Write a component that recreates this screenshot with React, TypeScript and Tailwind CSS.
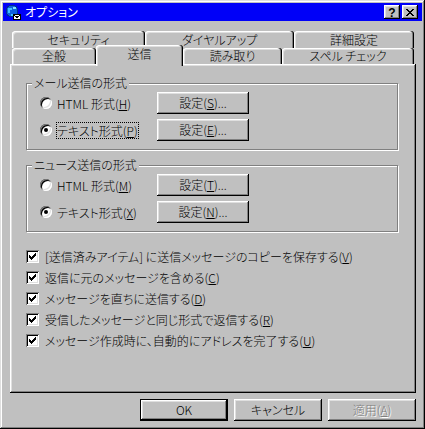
import React from "react";

const raised =
  "shadow-[inset_-1px_-1px_0_#000,inset_1px_1px_0_#fff,inset_-2px_-2px_0_#808080,inset_2px_2px_0_#dfdfdf]";
const tabShadow =
  "shadow-[inset_-1px_0_0_#000,inset_-2px_0_0_#808080,inset_1px_1px_0_#fff,inset_2px_2px_0_#dfdfdf]";
const sunken =
  "shadow-[inset_1px_1px_0_#808080,inset_-1px_-1px_0_#fff,inset_2px_2px_0_#000,inset_-2px_-2px_0_#dfdfdf]";

function Tab({
  label,
  w,
  selected,
}: {
  label: string;
  w: string;
  selected?: boolean;
}) {
  return (
    <div
      className={`${w} ${
        selected ? "relative z-10 -mt-[3px] h-[21px] pb-[3px]" : "h-full"
      } ${tabShadow} shrink-0 rounded-t-[3px] bg-[#c0c0c0] flex items-center justify-center whitespace-nowrap leading-none`}
    >
      {label}
    </div>
  );
}

function Btn({
  className,
  children,
}: {
  className: string;
  children: React.ReactNode;
}) {
  return (
    <div
      className={`${className} ${raised} bg-[#c0c0c0] flex items-center justify-center whitespace-nowrap leading-none`}
    >
      {children}
    </div>
  );
}

function Radio({ checked }: { checked?: boolean }) {
  return (
    <div
      className={`w-[12px] h-[12px] rounded-full bg-white ${sunken} flex items-center justify-center shrink-0`}
    >
      {checked && <div className="w-[4px] h-[4px] rounded-full bg-black" />}
    </div>
  );
}

function Check() {
  return (
    <div className={`w-[13px] h-[13px] bg-white ${sunken} shrink-0 relative`}>
      <svg
        width="13"
        height="13"
        viewBox="0 0 13 13"
        className="absolute left-0 top-0"
        shapeRendering="crispEdges"
      >
        <rect x="3" y="5" width="1" height="3" fill="#000" />
        <rect x="4" y="6" width="1" height="3" fill="#000" />
        <rect x="5" y="7" width="1" height="3" fill="#000" />
        <rect x="6" y="6" width="1" height="3" fill="#000" />
        <rect x="7" y="5" width="1" height="3" fill="#000" />
        <rect x="8" y="4" width="1" height="3" fill="#000" />
        <rect x="9" y="3" width="1" height="3" fill="#000" />
      </svg>
    </div>
  );
}

function RadioRow({
  checked,
  label,
  btn,
  focus,
}: {
  checked?: boolean;
  label: React.ReactNode;
  btn: React.ReactNode;
  focus?: boolean;
}) {
  return (
    <div className="flex items-center h-[22px]">
      <div className="w-[117px] flex items-center">
        <Radio checked={checked} />
        <span
          className={`ml-[4px] border ${
            focus ? "border-dotted border-black" : "border-transparent"
          } leading-[15px] whitespace-nowrap`}
        >
          {label}
        </span>
      </div>
      <Btn className="w-[92px] h-[22px]">{btn}</Btn>
    </div>
  );
}

function Group({
  title,
  children,
  className,
}: {
  title: string;
  children: React.ReactNode;
  className: string;
}) {
  return (
    <div
      className={`${className} relative w-[372px] border border-[#808080] shadow-[1px_1px_0_#fff,inset_1px_1px_0_#fff] pl-[13px] pt-[8px] pb-[8px] flex flex-col gap-[5px]`}
    >
      <span className="absolute left-[5px] -top-[8px] bg-[#c0c0c0] px-[2px] leading-[14px] whitespace-nowrap">
        {title}
      </span>
      {children}
    </div>
  );
}

function CheckRow({ children }: { children: React.ReactNode }) {
  return (
    <div className="flex items-center h-[21px]">
      <Check />
      <span className="ml-[6px] whitespace-nowrap leading-none">{children}</span>
    </div>
  );
}

function Icon() {
  return (
    <svg width="16" height="16" viewBox="0 0 16 16" shapeRendering="crispEdges">
      <circle cx="7" cy="7" r="6" fill="#1060e0" />
      <path d="M3 4h4v2h-2v3h-2z" fill="#40c0ff" />
      <path d="M8 3h3v2h-3z" fill="#80e0ff" />
      <path d="M6 10h3v2h-3z" fill="#40c0ff" />
      <circle cx="7" cy="7" r="6" fill="none" stroke="#003090" strokeWidth="1" />
      <rect x="8.5" y="10.5" width="7" height="5" fill="#fff" stroke="#000" />
      <path d="M9 11l3 2.5l3-2.5" fill="none" stroke="#000" />
    </svg>
  );
}

export default function App() {
  return (
    <div className="w-[425px] h-[429px] bg-[#c0c0c0] p-[3px] shadow-[inset_-1px_-1px_0_#000,inset_1px_1px_0_#dfdfdf,inset_-2px_-2px_0_#808080,inset_2px_2px_0_#fff] font-['Noto_Sans_CJK_JP','Noto_Sans',sans-serif] font-light [font-feature-settings:'palt'] text-[12px] text-black flex flex-col">
      {/* title bar */}
      <div className="h-[18px] bg-[#0000f8] flex items-center shrink-0">
        <div className="ml-[2px] w-[16px] h-[16px]">
          <Icon />
        </div>
        <span className="ml-[4px] text-white leading-none font-normal">オプション</span>
        <div className="flex-1" />
        <div
          className={`w-[16px] h-[14px] ${raised} bg-[#c0c0c0] flex items-center justify-center font-['Liberation_Sans',sans-serif] font-bold text-[12px] leading-none pt-[1px]`}
        >
          ?
        </div>
        <div
          className={`ml-[2px] mr-[4px] w-[16px] h-[14px] ${raised} bg-[#c0c0c0] flex items-center justify-center`}
        >
          <svg width="8" height="7" viewBox="0 0 8 7" shapeRendering="crispEdges">
            <path
              d="M0 0h2v1h-2zM6 0h2v1h-2zM1 1h2v1h-2zM5 1h2v1h-2zM2 2h4v1h-4zM3 3h2v1h-2zM2 4h4v1h-4zM1 5h2v1h-2zM5 5h2v1h-2zM0 6h2v1h-2zM6 6h2v1h-2z"
              fill="#000"
            />
          </svg>
        </div>
      </div>

      {/* tabs + panel */}
      <div className="ml-[7px] mt-[10px] w-[406px] flex flex-col">
        <div className="ml-[2px] h-[17px] flex">
          <Tab label="セキュリティ" w="w-[133px]" />
          <Tab label="ダイヤルアップ" w="w-[149px]" />
          <Tab label="詳細設定" w="w-[120px]" />
        </div>
        <div className="ml-[2px] h-[16px] flex items-start">
          <Tab label="全般" w="w-[84px]" />
          <Tab label="送信" w="w-[87px]" selected />
          <Tab label="読み取り" w="w-[99px]" />
          <Tab label="スペル チェック" w="w-[132px]" />
        </div>
        <div className="h-[329px] shadow-[inset_-1px_-1px_0_#000,inset_1px_1px_0_#fff,inset_-2px_-2px_0_#808080,inset_2px_2px_0_#dfdfdf] pt-[19px] pl-[16px] flex flex-col">
          <Group title="メール送信の形式" className="">
            <RadioRow
              label={
                <>
                  HTML 形式(<u>H</u>)
                </>
              }
              btn={
                <>
                  設定(<u>S</u>)...
                </>
              }
            />
            <RadioRow
              checked
              focus
              label={
                <>
                  テキスト形式(<u>P</u>)
                </>
              }
              btn={
                <>
                  設定(<u>E</u>)...
                </>
              }
            />
          </Group>
          <Group title="ニュース送信の形式" className="mt-[15px]">
            <RadioRow
              label={
                <>
                  HTML 形式(<u>M</u>)
                </>
              }
              btn={
                <>
                  設定(<u>T</u>)...
                </>
              }
            />
            <RadioRow
              checked
              label={
                <>
                  テキスト形式(<u>X</u>)
                </>
              }
              btn={
                <>
                  設定(<u>N</u>)...
                </>
              }
            />
          </Group>
          <div className="mt-[14px] flex flex-col">
            <CheckRow>
              [送信済みアイテム] に送信メッセージのコピーを保存する(<u>V</u>)
            </CheckRow>
            <CheckRow>
              返信に元のメッセージを含める(<u>C</u>)
            </CheckRow>
            <CheckRow>
              メッセージを直ちに送信する(<u>D</u>)
            </CheckRow>
            <CheckRow>
              受信したメッセージと同じ形式で返信する(<u>R</u>)
            </CheckRow>
            <CheckRow>
              メッセージ作成時に、自動的にアドレスを完了する(<u>U</u>)
            </CheckRow>
          </div>
        </div>
      </div>

      {/* bottom buttons */}
      <div className="mt-[6px] pr-[6px] flex justify-end gap-[6px]">
        <div className="w-[88px] h-[22px] border border-black">
          <Btn className="w-full h-full">OK</Btn>
        </div>
        <Btn className="w-[88px] h-[22px]">キャンセル</Btn>
        <Btn className="w-[88px] h-[22px] text-[#808080] [text-shadow:1px_1px_0_#fff]">
          <span>
            適用(<u>A</u>)
          </span>
        </Btn>
      </div>
    </div>
  );
}
